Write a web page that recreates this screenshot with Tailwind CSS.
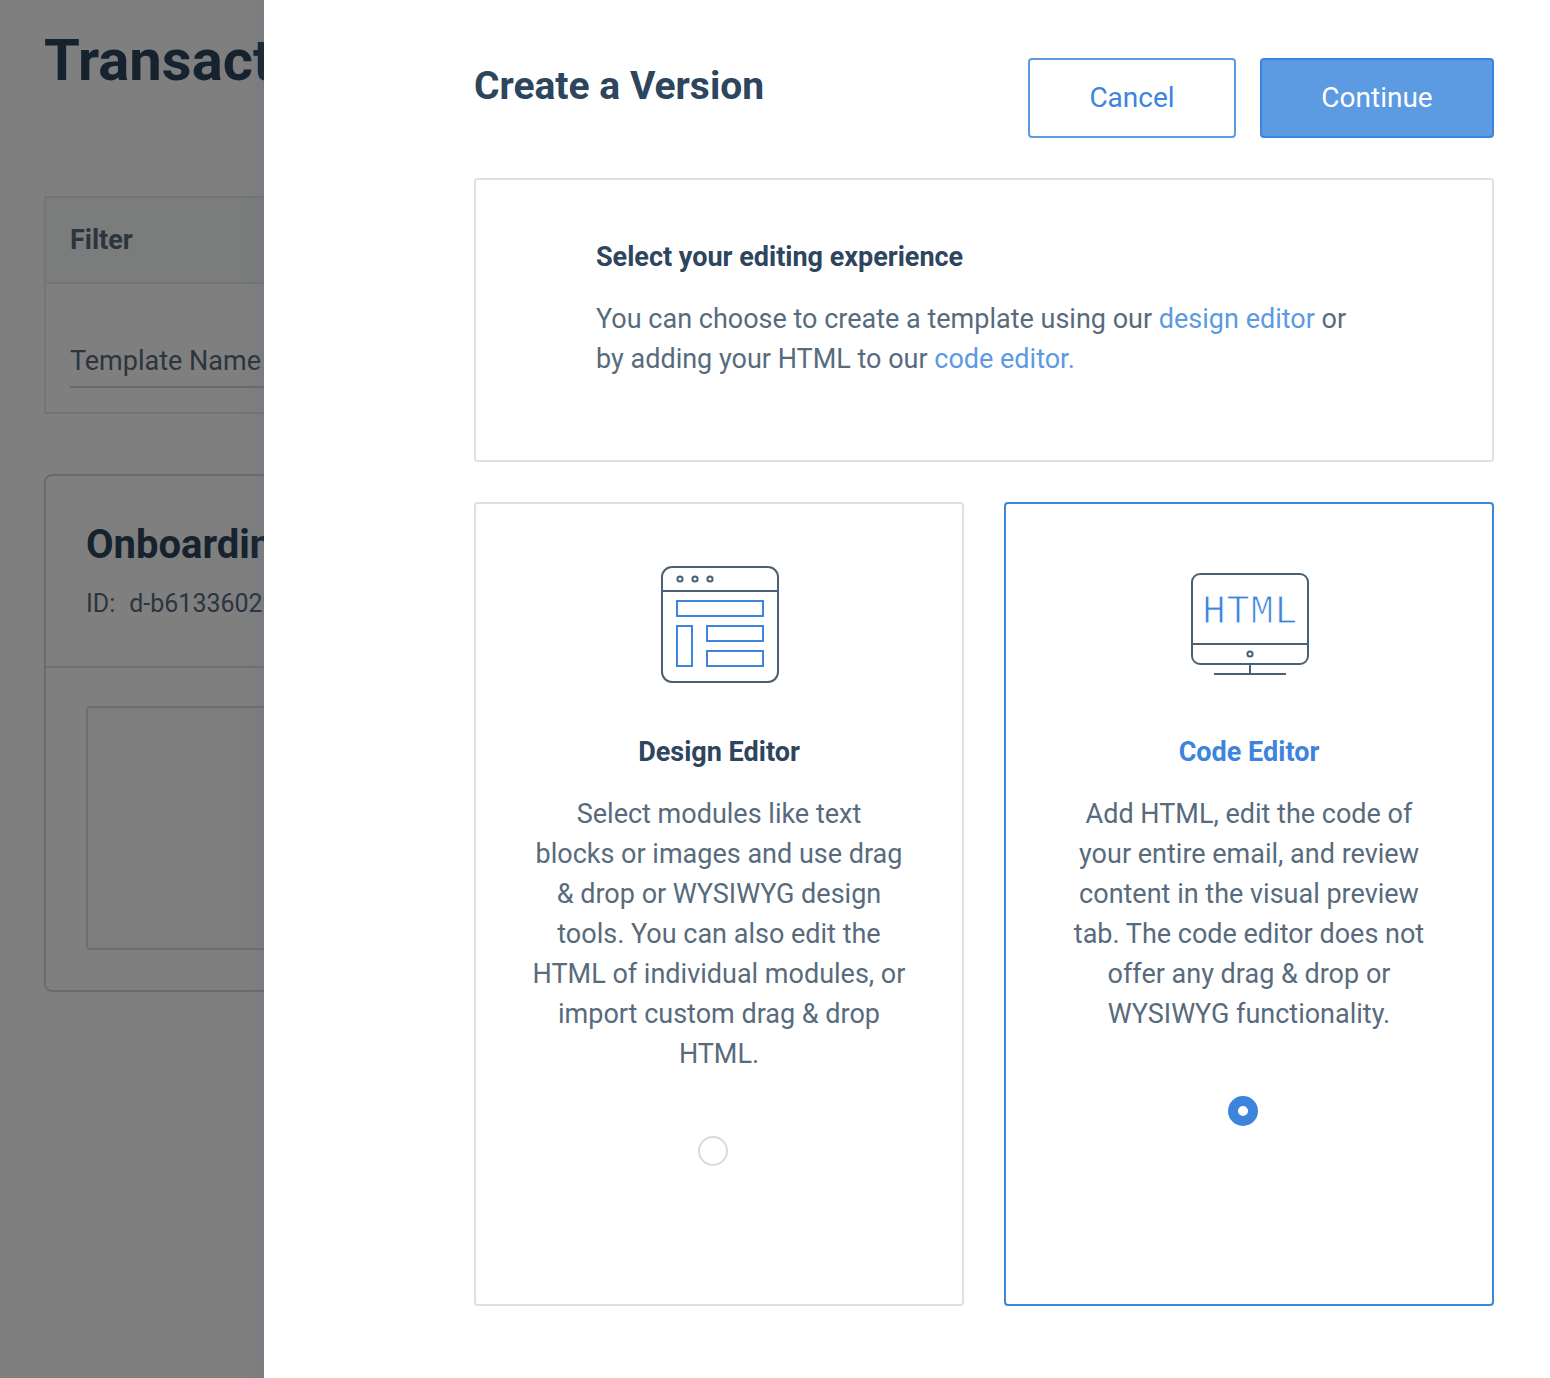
<!DOCTYPE html>
<html lang="en">
<head>
<meta charset="utf-8">
<meta name="viewport" content="width=device-width, initial-scale=1">
<title>Create a Version</title>
<script src="https://cdn.jsdelivr.net/npm/@tailwindcss/browser@4"></script>
</head>
<body class="flex min-h-screen overflow-x-hidden bg-white font-['Roboto','Liberation_Sans',sans-serif] text-[#586b7d]">

<!-- Templates page behind the dialog -->
<main class="relative w-[264px] shrink-0 overflow-hidden">
  <div class="w-screen px-11 pt-6">
    <h1 class="text-[58px] leading-[72px] font-bold whitespace-nowrap text-[#2d455d]">Transactional</h1>
    <section class="mt-[100px] border-2 border-[#e9ebeb]">
      <h2 class="border-b-2 border-[#e9ebeb] bg-[#f6f8f8] px-6 pt-[22px] pb-[22px] text-[27px] leading-10 font-bold">Filter</h2>
      <div class="px-6 pt-14 pb-6">
        <input type="text" aria-label="Template Name" placeholder="Template Name" class="block h-12 w-full border-b-2 border-[#cfd6dc] pb-1 text-[27px] leading-10 placeholder:text-[#586b7d] placeholder:opacity-100">
      </div>
    </section>
    <article class="mt-[60px] rounded-lg border-2 border-[#d6d6d6]">
      <header class="border-b-2 border-[#e0e0e0] px-10 pt-[45px] pb-11">
        <h2 class="text-[40px] leading-[48px] font-bold text-[#2d455d]">Onboarding</h2>
        <p class="mt-[17px] flex gap-[14px] text-[25px] leading-9"><span>ID:</span><span>d-b61336029f4c</span></p>
      </header>
      <div class="p-10 pt-[38px]">
        <div class="h-[244px] rounded border-2 border-[#dcdcdc] bg-[#fdfdfd]"></div>
      </div>
    </article>
  </div>
  <div class="absolute inset-0 bg-black/50"></div>
</main>

<section role="dialog" aria-modal="true" aria-labelledby="dialog-title" class="relative min-w-0 flex-1 bg-white pt-[58px] pr-14 pb-[72px] pl-[210px] shadow-[0_0_20px_rgba(90,105,140,0.3)]">
  <header class="flex h-20 items-center gap-6">
    <h2 id="dialog-title" class="-mt-6 flex-1 text-[39px] leading-[48px] font-bold text-[#2d455d]">Create a Version</h2>
    <button type="button" class="h-20 w-[208px] rounded border-2 border-[#5c9ae2] text-[28px] text-[#3d84dd]">Cancel</button>
    <button type="button" class="h-20 w-[234px] rounded border-2 border-[#3d84dd] bg-[#5c9ae2] text-[28px] text-white">Continue</button>
  </header>

  <section class="mt-10 rounded border-2 border-[#e0e0e0] px-[120px] pt-[57px] pb-[81px] text-[27px] leading-10">
    <h3 class="font-bold text-[#2d455d]">Select your editing experience</h3>
    <p class="mt-[22px]">You can choose to create a template using our <a href="#design" class="text-[#5c9ae2]">design editor</a> or<br>by adding your HTML to our <a href="#code" class="text-[#5c9ae2]">code editor.</a></p>
  </section>

  <div class="mt-10 grid min-h-[804px] grid-cols-2 gap-10 text-center text-[27px] leading-10">
    <label class="flex flex-col items-center rounded border-2 border-[#e0e0e0] pt-[60px]">
      <svg class="size-[120px]" viewBox="0 0 120 120" fill="none" stroke-width="2" aria-hidden="true">
        <g stroke="#4a6074">
          <rect x="3" y="3" width="116" height="115" rx="10"/>
          <path d="M3 27H119"/>
          <circle cx="21" cy="15" r="2.6"/><circle cx="36" cy="15" r="2.6"/><circle cx="51" cy="15" r="2.6"/>
        </g>
        <g stroke="#3d84dd">
          <rect x="18" y="37" width="86" height="15"/>
          <rect x="18" y="62" width="15" height="40"/>
          <rect x="48" y="62" width="56" height="15"/>
          <rect x="48" y="87" width="56" height="15"/>
        </g>
      </svg>
      <span class="mt-12 font-bold text-[#2d455d]">Design Editor</span>
      <span class="mt-[22px]">Select modules like text<br>blocks or images and use drag<br>&amp; drop or WYSIWYG design<br>tools. You can also edit the<br>HTML of individual modules, or<br>import custom drag &amp; drop<br>HTML.</span>
      <input type="radio" name="editor" value="design" class="mt-[62px] mr-3 size-[30px] appearance-none rounded-full border-2 border-[#d5dbe1] bg-white checked:border-[10px] checked:border-[#3d84dd]">
    </label>
    <label class="flex flex-col items-center rounded border-2 border-[#3d84dd] pt-[60px]">
      <svg class="size-[120px]" viewBox="0 0 120 120" fill="none" stroke-width="2" aria-hidden="true">
        <g stroke="#4a6074">
          <rect x="3" y="10" width="116" height="90" rx="8"/>
          <path d="M3 80H119M61 100V110M25 110H97"/>
          <circle cx="61" cy="90" r="2.6"/>
        </g>
        <text x="61" y="59" text-anchor="middle" stroke="#fff" stroke-width="1" class="fill-[#3d84dd] font-['Liberation_Mono',monospace] text-[40px]">HTML</text>
      </svg>
      <span class="mt-12 font-bold text-[#3d84dd]">Code Editor</span>
      <span class="mt-[22px]">Add HTML, edit the code of<br>your entire email, and review<br>content in the visual preview<br>tab. The code editor does not<br>offer any drag &amp; drop or<br>WYSIWYG functionality.</span>
      <input type="radio" name="editor" value="code" checked class="mt-[62px] mr-3 size-[30px] appearance-none rounded-full border-2 border-[#d5dbe1] bg-white checked:border-[10px] checked:border-[#3d84dd]">
    </label>
  </div>
</section>
</body>
</html>
